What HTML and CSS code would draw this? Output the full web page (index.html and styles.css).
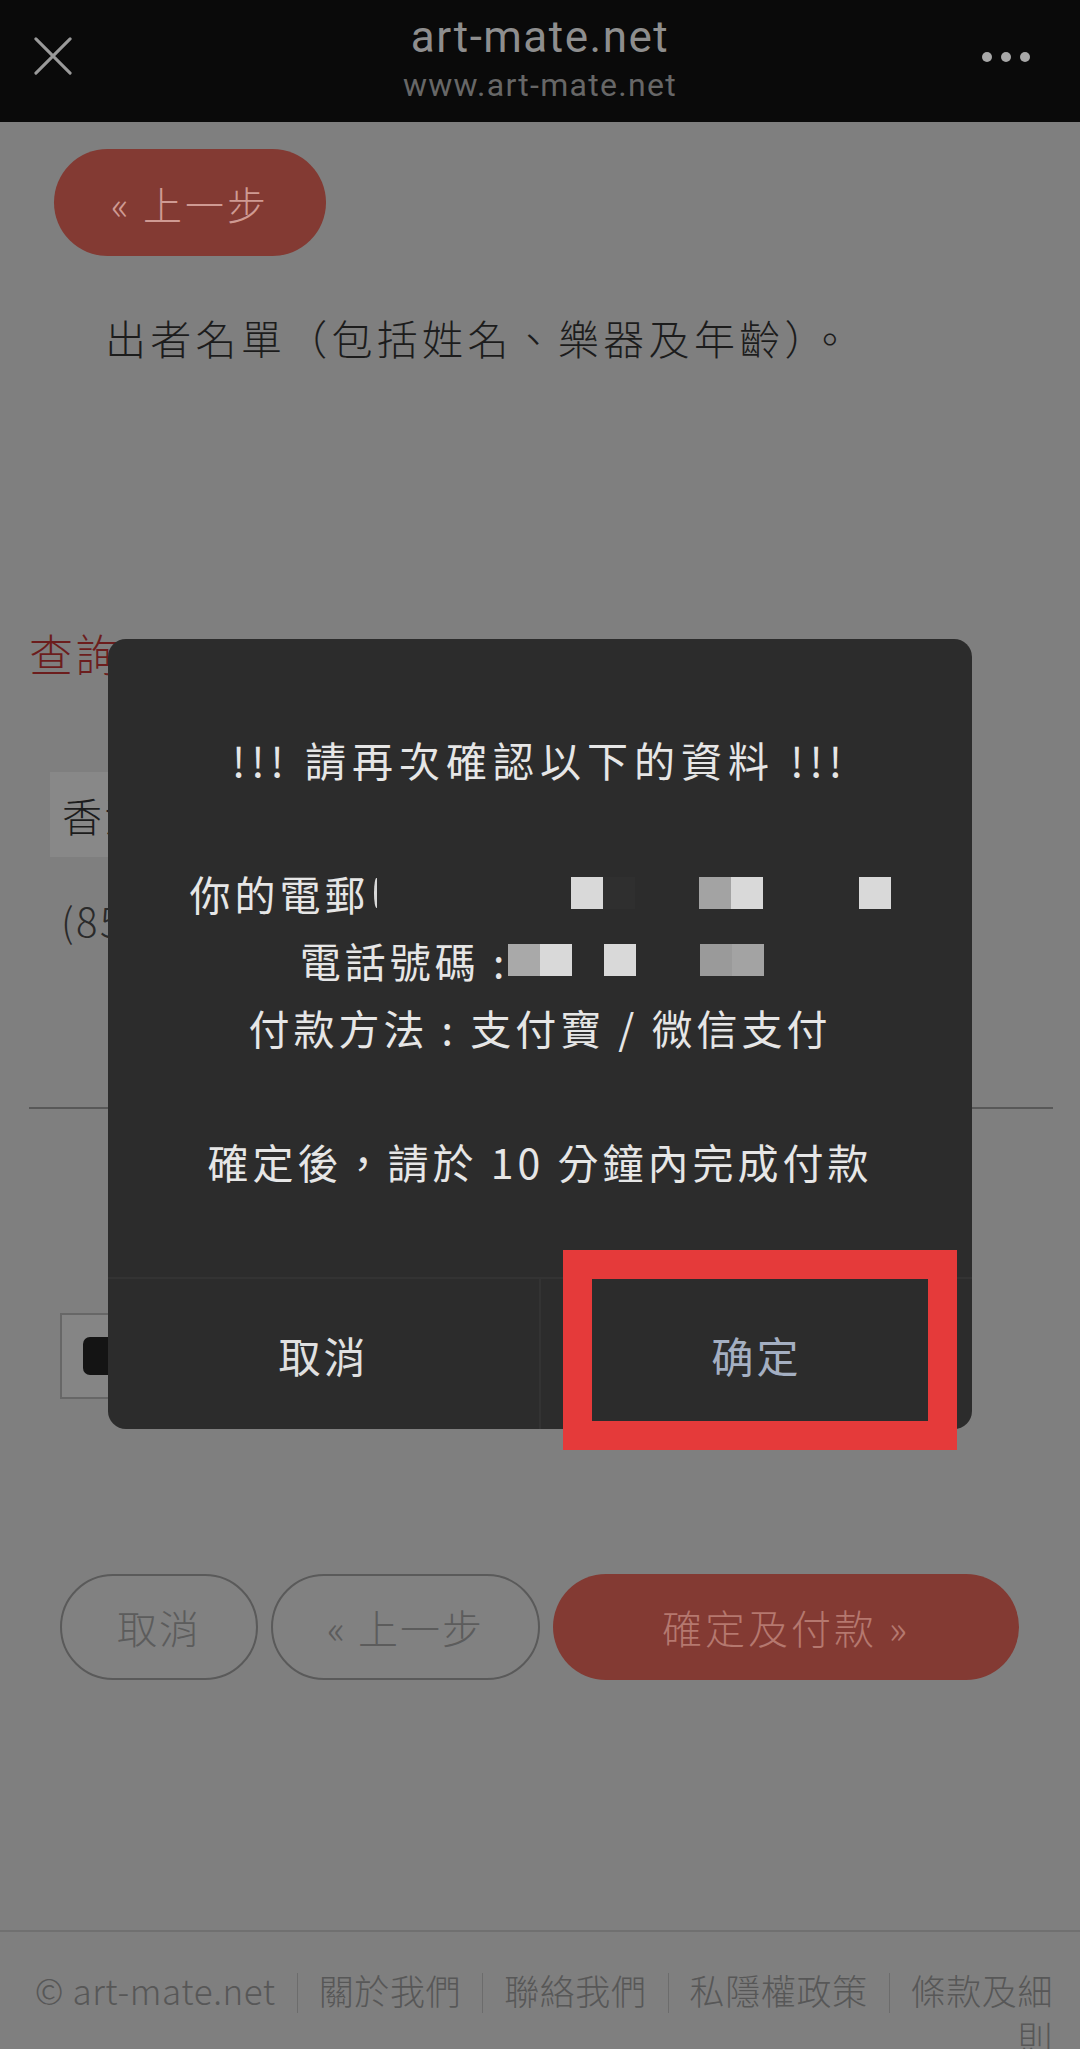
FILE: index.html
```html
<!DOCTYPE html>
<html lang="zh-Hant">
<head>
<meta charset="utf-8">
<title>art-mate.net</title>
<link rel="stylesheet" href="styles.css">
</head>
<body>
<header class="topbar">
  <div class="topbar-left">
    <svg class="icon-close" width="40" height="40" viewBox="0 0 40 40" aria-hidden="true">
      <path d="M2 2 L38 38 M38 2 L2 38" stroke="#9a9a9a" stroke-width="3.2" fill="none" stroke-linecap="round"/>
    </svg>
  </div>
  <div class="site">
    <div class="site-name">art-mate.net</div>
    <div class="site-url">www.art-mate.net</div>
  </div>
  <div class="topbar-right">
    <div class="more"><i></i><i></i><i></i></div>
  </div>
</header>

<main class="page">
  <div class="row-back"><span class="pill pill-red pill-back">« 上一步</span></div>
  <p class="note">出者名單（包括姓名、樂器及年齡）。</p>
  <h2 class="section-title">查詢</h2>
  <div class="select-box">香港</div>
  <p class="phone">(852)</p>
  <hr class="divider">
  <div class="checkbox"><span class="checkbox-mark"></span></div>
  <div class="actions">
    <span class="pill pill-outline pill-cancel">取消</span>
    <span class="pill pill-outline pill-prev">« 上一步</span>
    <span class="pill pill-red pill-pay">確定及付款 »</span>
  </div>
</main>

<footer class="footer">
  <div class="footer-links"><span class="flink">© art-mate.net</span><span class="fsep"></span><span class="flink">關於我們</span><span class="fsep"></span><span class="flink">聯絡我們</span><span class="fsep"></span><span class="flink">私隱權政策</span><span class="fsep"></span><span class="flink">條款及細則</span></div>
</footer>

<div class="dialog" role="dialog">
  <div class="dialog-body">
    <div class="line title">!!! 請再次確認以下的資料 !!!</div>
    <div class="line"></div>
    <div class="line">你的電郵<span class="cut"></span><span class="mask"><i></i><i></i><i></i><i></i><i></i><i></i><i class="w"></i><i class="d"></i><i></i><i></i><i class="g"></i><i class="w"></i><i></i><i></i><i></i><i class="w"></i></span></div>
    <div class="line">電話號碼 :<span class="mask"><i class="g2"></i><i class="w"></i><i></i><i class="w"></i><i></i><i></i><i class="g3"></i><i class="g"></i></span><span class="pad"></span></div>
    <div class="line">付款方法 : 支付寶 / 微信支付</div>
    <div class="line"></div>
    <div class="line">確定後，請於 10 分鐘內完成付款</div>
  </div>
  <div class="dialog-actions">
    <div class="dbtn">取消</div>
    <div class="dbtn confirm">确定</div>
  </div>
</div>
<div class="highlight"></div>
</body>
</html>
```

FILE: styles.css
```css
* { box-sizing: border-box; }

body {
  margin: 0;
  width: 1080px;
  height: 2049px;
  overflow: hidden;
  position: relative;
  background: #7f7f7f;
  font-family: "Noto Sans CJK TC", "Noto Sans", sans-serif;
  color: #1e1e1e;
}

/* top bar */
.topbar {
  height: 122px;
  background: #0a0a0a;
  display: grid;
  grid-template-columns: 1fr auto 1fr;
  align-items: start;
}
.topbar-left { padding: 37px 0 0 34px; }
.icon-close { display: block; width: 38px; height: 38px; }
.site { text-align: center; padding-top: 11px; }
.site-name {
  font-family: Roboto, "Noto Sans", sans-serif;
  font-size: 44px;
  line-height: 52px;
  letter-spacing: 1.5px;
  color: #8e8e8e;
}
.site-url {
  font-family: Roboto, "Noto Sans", sans-serif;
  font-size: 32px;
  line-height: 40px;
  letter-spacing: 1.3px;
  color: #676767;
  margin-top: 2px;
}
.topbar-right { display: flex; justify-content: flex-end; padding: 52px 50px 0 0; }
.more { display: flex; gap: 9px; }
.more i { display: block; width: 10px; height: 10px; border-radius: 50%; background: #a8a8a8; }

/* page content */
.page {
  display: flex;
  flex-direction: column;
  align-items: flex-start;
  padding: 0 27px 0 29px;
  font-size: 40px;
  letter-spacing: 2.5px;
}
.pill {
  display: flex;
  align-items: center;
  justify-content: center;
  border-radius: 60px;
  font-size: 38px;
  letter-spacing: 2px;
  font-weight: 300;
}
.pill-red { background: #833a33; color: #cf9a93; }
.pill-back { width: 272px; height: 107px; margin: 27px 0 0 25px; letter-spacing: 3px; font-size: 39px; }
.note {
  margin: 51px 0 0 76px;
  line-height: 60px;
  font-size: 41px;
  font-weight: 300;
  color: #1c1c1c;
  letter-spacing: 4.3px;
}
.section-title {
  margin: 256px 0 0 0;
  font-size: 44px;
  line-height: 60px;
  font-weight: 300;
  color: #6c1d1d;
}
.select-box {
  margin: 89px 0 0 21px;
  width: 420px;
  height: 85px;
  background: #888888;
  display: flex;
  align-items: center;
  padding-left: 12px;
  font-weight: 300;
  color: #1c1c1c;
}
.phone {
  margin: 33px 0 0 32px;
  line-height: 60px;
  font-weight: 300;
  color: #2a2a2a;
}
.divider {
  align-self: stretch;
  margin: 157px 0 0 0;
  border: 0;
  height: 2px;
  background: #585858;
}
.checkbox {
  margin: 204px 0 0 31px;
  width: 86px;
  height: 86px;
  border: 2px solid #676767;
  background: #858585;
  padding: 22px 0 0 21px;
}
.checkbox-mark { display: block; width: 40px; height: 38px; border-radius: 7px; background: #141414; }

.actions { display: flex; gap: 13px; margin: 175px 0 0 31px; }
.pill-outline {
  height: 106px;
  border: 2px solid #5a5a5a;
  background: #818181;
  color: #5c5c5c;
  font-size: 40px;
}
.pill-cancel { width: 198px; }
.pill-prev { width: 269px; }
.pill-pay { width: 466px; height: 106px; font-size: 40px; letter-spacing: 3px; color: #b5786f; }

/* footer */
.footer {
  margin-top: 250px;
  border-top: 2px solid #707070;
  padding: 34px 27px 0 30px;
}
.footer-links {
  text-align: right;
  font-size: 35px;
  line-height: 47px;
  font-weight: 300;
  color: #575757;
}
.flink { letter-spacing: 0.6px; }
.fsep {
  display: inline-block;
  width: 1px;
  height: 40px;
  background: #6c6c6c;
  margin: 0 21px;
  vertical-align: -8px;
}

/* dialog */
.dialog {
  position: absolute;
  left: 108px;
  top: 639px;
  width: 864px;
  height: 790px;
  background: #2c2c2c;
  border-radius: 18px;
  display: flex;
  flex-direction: column;
  overflow: hidden;
}
.dialog-body {
  padding-top: 86px;
  height: 638px;
  color: #e6e6e6;
  font-size: 41px;
  letter-spacing: 4px;
}
.line {
  height: 67px;
  display: flex;
  align-items: center;
  justify-content: center;
  white-space: pre;
}
.line.title { letter-spacing: 6px; }
.cut {
  display: inline-block;
  width: 5px;
  height: 30px;
  border-left: 3px solid #d8d8d8;
  border-radius: 50% 0 0 50%;
  margin-left: 4px;
}
.mask { display: inline-flex; }
.mask i { display: block; width: 32px; height: 32px; }
.mask i.w { background: #d9d9d9; }
.mask i.g { background: #a3a3a3; }
.mask i.g2 { background: #a9a9a9; }
.mask i.g3 { background: #9a9a9a; }
.mask i.d { background: #2f2f2f; }
.pad { display: inline-block; width: 16px; }

.dialog-actions {
  flex: 1;
  display: flex;
  border-top: 2px solid #333333;
}
.dbtn {
  flex: 1;
  display: flex;
  align-items: center;
  justify-content: center;
  font-size: 42px;
  letter-spacing: 3px;
  color: #e0e0e0;
}
.dbtn + .dbtn { border-left: 2px solid #333333; }
.dbtn.confirm { color: #a4afc2; }

.highlight {
  position: absolute;
  left: 563px;
  top: 1250px;
  width: 394px;
  height: 200px;
  border: 29px solid #e53a3a;
}
```
